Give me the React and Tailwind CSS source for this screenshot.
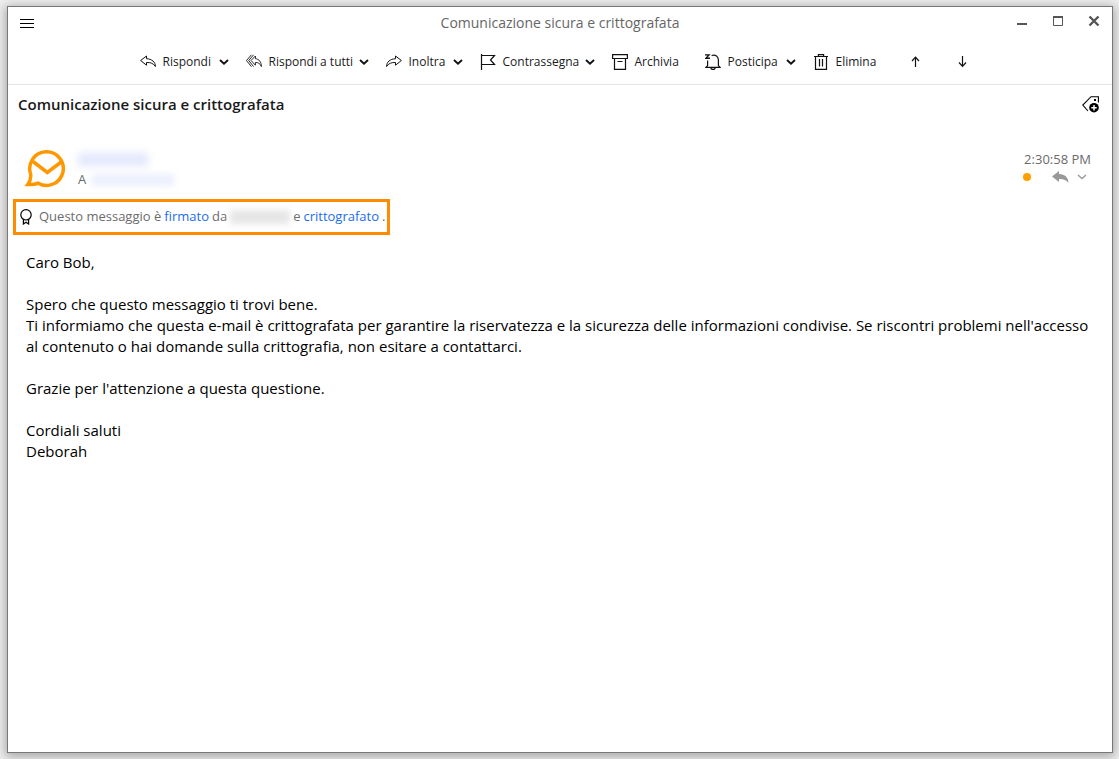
const ink = 'stroke-[#111]';

function Glyph({ children, className = 'size-4', box = '0 0 16 16' }) {
  return (
    <svg viewBox={box} className={`${className} shrink-0 fill-none ${ink}`} strokeWidth="1" strokeLinejoin="round" aria-hidden="true">
      {children}
    </svg>
  );
}

const ReplyIcon = () => (
  <Glyph>
    <path d="M6.5 2 L.6 6.5 L6.5 11.2 V8.5 C10.5 8.3 13.4 9.4 15.4 12.5 C15.4 8 12 5 6.5 4.7 Z" />
  </Glyph>
);

const ReplyAllIcon = () => (
  <Glyph>
    <path strokeWidth="0.9" d="M5.4 .8 L.5 6.5 L5.4 12.6 M7.6 .8 L2.7 6.5 L7.6 12.6 M9.4 2 L5 6.5 L9.4 11.2 V8.5 C12 8.3 14 9.4 15.4 12.5 C15.4 8 13 5 9.4 4.7 Z" />
  </Glyph>
);

const ForwardIcon = () => (
  <Glyph>
    <path d="M9.5 2 L15.4 6.5 L9.5 11.2 V8.5 C5.5 8.3 2.6 9.4 .6 12.5 C.6 8 4 5 9.5 4.7 Z" />
  </Glyph>
);

const FlagIcon = () => (
  <Glyph>
    <path strokeLinejoin="miter" strokeWidth="1.2" d="M1.5 0 V16 M1.5 1.5 H14.5 L10.5 6 L14.5 10.5 H1.5" />
  </Glyph>
);

const ArchiveIcon = () => (
  <Glyph>
    <path strokeLinejoin="miter" strokeWidth="1.2" d="M.6 .6 H15.4 V4.5 H.6 Z M2.5 4.5 V15.4 H13.5 V4.5 M5.5 7.5 H10.5" />
  </Glyph>
);

const SnoozeIcon = () => (
  <Glyph>
    <path strokeWidth="1.4" strokeLinejoin="miter" d="M0 .9 H4 L.8 4.3 H5" />
    <path strokeWidth="1.2" strokeLinejoin="miter" d="M6.6 1.5 C10.6 .2 13.4 2.6 13.4 6 V11.6 L15 13.4 H1 L2.6 11.6 V6.4 M5.8 13.8 C6.2 16 9.8 16 10.2 13.8" />
  </Glyph>
);

const TrashIcon = () => (
  <Glyph>
    <path strokeWidth="1.2" strokeLinejoin="miter" d="M1 2.5 H15 M5.4 2.4 V.6 H10.6 V2.4 M2.5 2.5 V15.4 H13.5 V2.5 M6.5 5 V12.6 M9.5 5 V12.6" />
  </Glyph>
);

function Chevron({ className = 'stroke-[#111]', weight = 1.9 }) {
  return (
    <svg viewBox="0 0 10 6" className={`h-1.5 w-2.5 shrink-0 fill-none ${className}`} strokeWidth={weight} aria-hidden="true">
      <path d="M1 1 L5 4.6 L9 1" />
    </svg>
  );
}

const actions = [
  { label: 'Rispondi', icon: ReplyIcon, menu: true, width: 'w-[106px]' },
  { label: 'Rispondi a tutti', icon: ReplyAllIcon, menu: true, width: 'w-[140px]' },
  { label: 'Inoltra', icon: ForwardIcon, menu: true, width: 'w-[94px]' },
  { label: 'Contrassegna', icon: FlagIcon, menu: true, width: 'w-[132px]' },
  { label: 'Archivia', icon: ArchiveIcon, width: 'w-[93px]' },
  { label: 'Posticipa', icon: SnoozeIcon, menu: true, width: 'w-[108px]' },
  { label: 'Elimina', icon: TrashIcon, width: 'w-[95px]' },
];

function Action({ label, icon: Icon, menu, width }) {
  return (
    <div className={`flex items-center justify-between pr-[17px] ${width}`}>
      <button type="button" className="flex items-center gap-[7px] whitespace-nowrap">
        <Icon />
        {label}
      </button>
      {menu && (
        <button type="button" aria-label={`Opzioni: ${label}`} className="flex h-4 items-center">
          <Chevron />
        </button>
      )}
    </div>
  );
}

function Arrow({ label, d }) {
  return (
    <button type="button" aria-label={label} className="flex h-4 w-4 items-center justify-center">
      <svg viewBox="0 0 12 12" className="size-3 fill-none stroke-[#111]" strokeWidth="1.2" aria-hidden="true">
        <path d={d} />
      </svg>
    </button>
  );
}

export default function App() {
  return (
    <div className="flex min-h-screen bg-[#f0f0f0] pt-1.5 pr-1.5 pb-1.5 pl-[7px] font-['Open_Sans','Noto_Sans',sans-serif] text-[#1a1a1a]">
      <div className="flex min-w-0 flex-1 flex-col border border-[#777] bg-white shadow-[0_2px_10px_2px_rgba(0,0,0,0.3)]">
        <header className="border-b border-[#e5e5e5]">
          <div className="flex h-8 items-center justify-between pr-3 pl-3">
            <button type="button" aria-label="Menu" className="flex w-21">
              <svg viewBox="0 0 14 9" className="h-[9px] w-3.5 stroke-black" strokeWidth="1" aria-hidden="true">
                <path d="M0 .5 H14 M0 4.5 H14 M0 8.5 H14" />
              </svg>
            </button>
            <h1 className="text-sm text-[#666]">Comunicazione sicura e crittografata</h1>
            <div className="flex w-21 items-center justify-between pb-1">
              <button type="button" aria-label="Riduci a icona">
                <svg viewBox="0 0 12 12" className="w-3" aria-hidden="true">
                  <path d="M1 8 H11 V10 H1 Z" fill="#555" />
                </svg>
              </button>
              <button type="button" aria-label="Ingrandisci">
                <svg viewBox="0 0 12 12" className="w-3 fill-none stroke-[#555]" aria-hidden="true">
                  <path d="M1.5 1 V10.5 H10.5 V1" />
                  <path d="M1 2 H11" strokeWidth="2" />
                </svg>
              </button>
              <button type="button" aria-label="Chiudi">
                <svg viewBox="0 0 12 12" className="w-3 stroke-[#555]" strokeWidth="2.4" aria-hidden="true">
                  <path d="M1.5 1.5 L10.5 10.5 M10.5 1.5 L1.5 10.5" />
                </svg>
              </button>
            </div>
          </div>
          <nav aria-label="Azioni messaggio" className="flex h-[45px] items-center justify-center pr-2.5 text-xs">
            {actions.map((action) => (
              <Action key={action.label} {...action} />
            ))}
            <div className="flex gap-[31px]">
              <Arrow label="Messaggio precedente" d="M5.5 11 V1.5 M2 5 L5.5 1.2 L9 5" />
              <Arrow label="Messaggio successivo" d="M5.5 0 V10 M2 6.5 L5.5 10.3 L9 6.5" />
            </div>
          </nav>
        </header>

        <main>
          <div className="flex h-[38px] items-center justify-between pr-3 pl-2.5">
            <h2 className="text-[15px] font-semibold">Comunicazione sicura e crittografata</h2>
            <button type="button" aria-label="Aggiungi etichetta">
              <svg viewBox="0 0 18 17" className="h-[17px] w-[18px] fill-none stroke-black" aria-hidden="true">
                <path d="M6 15 L.8 9 L9 .7 H16.4 V6.5" strokeWidth="1.1" />
                <rect x="12" y="3" width="2" height="2" fill="black" stroke="none" />
                <circle cx="12" cy="11.7" r="4.8" fill="black" stroke="none" />
                <path d="M12 9 V14.4 M9.3 11.7 H14.7" stroke="white" strokeWidth="1.4" />
              </svg>
            </button>
          </div>

          <div className="flex items-start justify-between pt-[26px] pr-[21px] pl-4 text-[13px] text-[#6b6b6b]">
            <div className="flex gap-3">
              <svg viewBox="-1 -1 42 40" className="h-10 w-[42px] fill-none stroke-[#ff9800]" strokeWidth="3.5" aria-hidden="true">
                <path d="M5.6 24 A16.8 16.8 0 1 1 13.2 33.2 C10 34.6 6 34.6 2.8 34.6 C5 31.5 6.2 28 5.6 24 Z" />
                <path d="M8 11.5 L22.3 22.5 L36.8 11.5" />
              </svg>
              <div className="pt-1">
                <div aria-hidden="true" className="h-[13px] w-[70px] bg-[#e2e7fc] blur-[4px]" />
                <div className="flex h-7 items-center gap-1.5">
                  <span>A</span>
                  <div aria-hidden="true" className="h-3 w-[82px] bg-[#eceffd] blur-[3px]" />
                </div>
              </div>
            </div>
            <div className="flex flex-col items-end">
              <time className="leading-5">2:30:58 PM</time>
              <div className="flex h-4 items-center pr-1">
                <span className="mr-[21px] size-2 rounded-full bg-[#ff9f00]" />
                <button type="button" aria-label="Rispondi" className="mr-2">
                  <svg viewBox="0 0 17 12" className="h-3 w-[17px] fill-[#999]" aria-hidden="true">
                    <path d="M7 0 L0 5.5 L7 11 V8 C11 7.8 14.5 8.8 16.5 12 C16.5 6.8 13 3.2 7 3 Z" />
                  </svg>
                </button>
                <button type="button" aria-label="Altre opzioni">
                  <Chevron className="stroke-[#999]" weight={1.4} />
                </button>
              </div>
            </div>
          </div>

          <div className="mt-[5px] ml-[5px] flex h-9 w-fit items-center border-3 border-[#ff8c00] pr-0.5 pl-1 text-[13px] text-[#6b6b6b]">
            <svg viewBox="0 0 12 16" className="mr-[7px] h-4 w-3 fill-none stroke-black" strokeWidth="1.2" aria-hidden="true">
              <circle cx="6" cy="5.8" r="5.2" />
              <path d="M3.4 10.6 V15 L6 13.2 L8.6 15 V10.6" />
            </svg>
            <p className="flex items-center gap-[3px] whitespace-nowrap">
              Questo messaggio è{' '}
              <a href="#firma" className="text-[#1a6cf0]">firmato</a> da{' '}
              <span aria-hidden="true" className="h-3.5 w-[60px] bg-[#e6e6e6] blur-[3px]" />
              e <a href="#crittografia" className="text-[#1a6cf0]">crittografato</a> .
            </p>
          </div>

          <article className="px-[18px] pt-[17px] pb-4 text-[15px] leading-[21px] text-black">
            <p className="mb-[21px]">Caro Bob,</p>
            <p>Spero che questo messaggio ti trovi bene.</p>
            <p className="mb-[21px]">
              Ti informiamo che questa e-mail è crittografata per garantire la riservatezza e la sicurezza delle informazioni condivise. Se riscontri problemi nell'accesso al contenuto o hai domande sulla crittografia, non esitare a contattarci.
            </p>
            <p className="mb-[21px]">Grazie per l'attenzione a questa questione.</p>
            <p>Cordiali saluti</p>
            <p>Deborah</p>
          </article>
        </main>
      </div>
    </div>
  );
}
